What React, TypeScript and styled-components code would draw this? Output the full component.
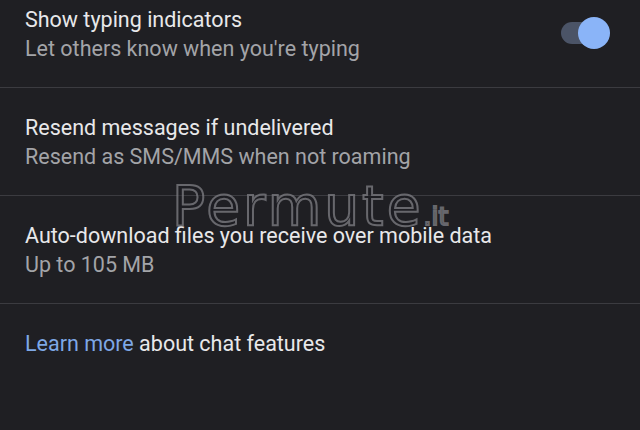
import * as React from "react";
import styled, { createGlobalStyle } from "styled-components";

const GlobalStyle = createGlobalStyle`
  html, body {
    margin: 0;
    padding: 0;
    background: #1f1f23;
  }
  body {
    font-family: Roboto, "Liberation Sans", sans-serif;
  }
`;

const settings = [
    { title: "Show typing indicators", subtitle: "Let others know when you're typing", toggle: true },
    { title: "Resend messages if undelivered", subtitle: "Resend as SMS/MMS when not roaming" },
    { title: "Auto-download files you receive over mobile data", subtitle: "Up to 105 MB" },
];

export default function App() {
    return (
        <>
            <GlobalStyle />
            <Screen>
                <List>
                    {settings.map((s) => (
                        <Row key={s.title}>
                            <TextBlock>
                                <Title>{s.title}</Title>
                                <Subtitle>{s.subtitle}</Subtitle>
                            </TextBlock>
                            {s.toggle && (
                                <Switch>
                                    <Track />
                                    <Knob />
                                </Switch>
                            )}
                        </Row>
                    ))}
                    <FooterRow>
                        <Link>Learn more</Link> about chat features
                    </FooterRow>
                </List>
                <Watermark>
                    Permute<Small>.it</Small>
                </Watermark>
            </Screen>
        </>
    );
}

const Screen = styled.div`
  position: relative;
  width: 640px;
  height: 430px;
  overflow: hidden;
  background: #1f1f23;
`;

const List = styled.div`
  display: flex;
  flex-direction: column;
  margin-top: -20px;
`;

const Row = styled.div`
  display: flex;
  align-items: center;
  justify-content: space-between;
  height: 108px;
  box-sizing: border-box;
  padding: 0 30px 0 25px;
  border-bottom: 1px solid #3b3b40;
`;

const TextBlock = styled.div`
  display: flex;
  flex-direction: column;
`;

const Title = styled.div`
  color: #e8e8ea;
  font-size: 21.5px;
  line-height: 29px;
`;

const Subtitle = styled.div`
  color: #a3a4a8;
  font-size: 21.5px;
  line-height: 29px;
`;

const Switch = styled.div`
  position: relative;
  width: 49px;
  height: 32px;
  margin-top: -2px;
`;

const Track = styled.div`
  position: absolute;
  left: 0;
  top: 5px;
  width: 40px;
  height: 22px;
  border-radius: 11px;
  background: #4b5467;
`;

const Knob = styled.div`
  position: absolute;
  right: 0;
  top: 0;
  width: 32px;
  height: 32px;
  border-radius: 50%;
  background: #8ab4f8;
`;

const FooterRow = styled.div`
  padding: 26px 25px;
  font-size: 21.5px;
  line-height: 28px;
  color: #e8e8ea;
`;

const Link = styled.span`
  color: #7ea8e6;
`;

const Watermark = styled.div`
  position: absolute;
  left: 172px;
  top: 175px;
  font-family: "DejaVu Sans", sans-serif;
  font-size: 55px;
  line-height: 62px;
  letter-spacing: 3px;
  color: rgba(28, 28, 32, 0.4);
  -webkit-text-stroke: 2px rgba(128, 128, 134, 0.75);
  pointer-events: none;
`;

const Small = styled.span`
  font-size: 25px;
  letter-spacing: 0;
`;
